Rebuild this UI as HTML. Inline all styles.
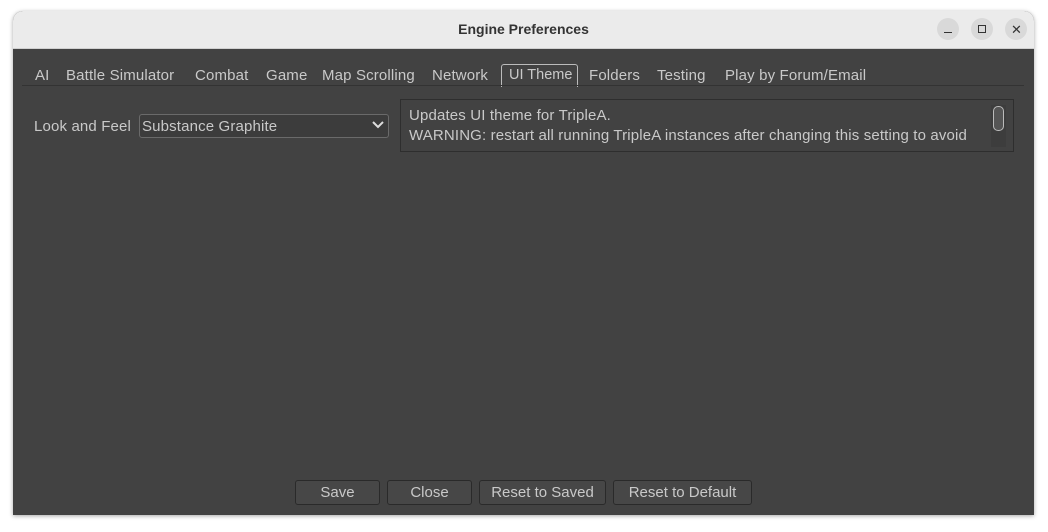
<!DOCTYPE html>
<html><head><style>
body{margin:0;width:1048px;height:532px;background:#fff;position:relative;overflow:hidden;font-family:"Liberation Sans",sans-serif;}
.win{position:absolute;left:13px;top:11px;width:1021px;height:504px;border-radius:10px 10px 0 0;overflow:hidden;box-shadow:0 1px 4px rgba(0,0,0,.35);background:#424242;}
.tb{position:absolute;left:0;top:0;width:100%;height:37px;background:#ebebeb;border-bottom:1px solid #d0d0d0;}
.title{position:absolute;left:0;width:100%;top:10px;text-align:center;font-weight:bold;font-size:14px;color:#333;}
.wb{position:absolute;top:7px;width:22px;height:22px;border-radius:50%;background:#d9d9d9;}
.t{position:absolute;color:#c9c9c9;font-size:15px;white-space:nowrap;letter-spacing:.15px;}
.box{position:absolute;border:1px solid #2e2e2e;}
.btn{position:absolute;top:469px;height:23px;border:1px solid #2a2a2a;border-radius:3px;background:#474747;color:#c9c9c9;font-size:15px;text-align:center;line-height:23px;}
</style></head><body>
<div class="win">
 <div class="tb"><div class="title">Engine Preferences</div>
  <div class="wb" style="left:924px"><div style="position:absolute;left:7px;top:14px;width:8px;height:1px;background:#333"></div></div>
  <div class="wb" style="left:958px"><div style="position:absolute;left:7px;top:7px;width:6px;height:6px;border:1px solid #333"></div></div>
  <div class="wb" style="left:992px"><div style="position:absolute;left:6px;top:4px;font-size:13px;color:#333">✕</div></div>
 </div>
 <div style="position:absolute;left:488px;top:53px;width:75px;height:22px;border:1px solid #bbb;border-bottom:none;border-radius:3px 3px 0 0;"></div>
 <div style="position:absolute;left:9px;top:74px;width:1002px;height:1px;background:#333"></div>
 <div class="t" style="left:22px;top:56px">AI</div>
 <div class="t" style="left:53px;top:56px">Battle Simulator</div>
 <div class="t" style="left:182px;top:56px">Combat</div>
 <div class="t" style="left:253px;top:56px">Game</div>
 <div class="t" style="left:309px;top:56px">Map Scrolling</div>
 <div class="t" style="left:419px;top:56px">Network</div>
 <div class="t" style="left:496px;top:56px;font-size:14.5px;letter-spacing:0">UI Theme</div>
 <div class="t" style="left:576px;top:56px">Folders</div>
 <div class="t" style="left:644px;top:56px">Testing</div>
 <div class="t" style="left:712px;top:56px">Play by Forum/Email</div>
 <div class="t" style="left:21px;top:107px">Look and Feel</div>
 <div class="box" style="left:126px;top:103px;width:248px;height:22px;border-color:#6a6a6a;border-radius:3px;background:#3c3c3c"></div>
 <div class="t" style="left:129px;top:107px">Substance Graphite</div>
 <svg style="position:absolute;left:358px;top:108px" width="14" height="12"><path d="M2 3 L7 8 L12 3" stroke="#ddd" stroke-width="2" fill="none"/></svg>
 <div class="box" style="left:387px;top:88px;width:612px;height:51px;background:#424242"></div>
 <div class="t" style="left:396px;top:96px">Updates UI theme for TripleA.</div>
 <div class="t" style="left:396px;top:116px">WARNING: restart all running TripleA instances after changing this setting to avoid</div>
 <div style="position:absolute;left:978px;top:94px;width:15px;height:42px;background:#3d3d3d"></div>
 <div style="position:absolute;left:980px;top:95px;width:9px;height:23px;border:1px solid #bbb;border-radius:5px;background:#555"></div>
 <div class="btn" style="left:282px;width:83px">Save</div>
 <div class="btn" style="left:374px;width:83px">Close</div>
 <div class="btn" style="left:466px;width:125px">Reset to Saved</div>
 <div class="btn" style="left:600px;width:137px">Reset to Default</div>
</div>
</body></html>
